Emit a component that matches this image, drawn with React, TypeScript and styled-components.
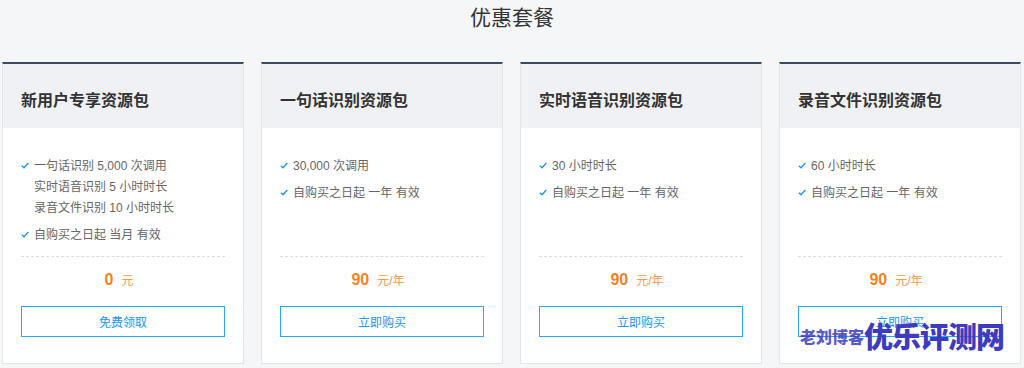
import React from "react";
import styled, { createGlobalStyle } from "styled-components";

const GlobalStyle = createGlobalStyle`
  html, body {
    margin: 0;
    padding: 0;
    background: #f5f6f8;
    font-family: "Liberation Sans", "Noto Sans CJK SC", sans-serif;
  }
`;

const Page = styled.div`
  position: relative;
  width: 1024px;
  height: 368px;
  overflow: hidden;
  background: #f5f6f8;
`;

const Title = styled.h2`
  margin: 0;
  height: 62px;
  padding-top: 1px;
  box-sizing: border-box;
  text-align: center;
  font: normal 400 21px/30px "Noto Sans CJK SC", sans-serif;
  color: #333;
`;

const Cards = styled.div`
  display: grid;
  grid-template-columns: repeat(4, 242px);
  column-gap: 17px;
  padding-left: 2px;
`;

const Card = styled.div`
  background: #fff;
  border-top: 2px solid #3d4a65;
  border-left: 1px solid #e3e5e9;
  border-right: 1px solid #e3e5e9;
  border-bottom: 1px solid #e3e5e9;
`;

const Header = styled.div`
  height: 64px;
  display: flex;
  align-items: center;
  padding: 6px 18px 0;
  box-sizing: border-box;
  background: #f0f1f4;
  font: normal 700 16px "Noto Sans CJK SC", sans-serif;
  color: #333;
`;

const Body = styled.div`
  padding: 28px 18px 26px;
`;

const List = styled.ul`
  list-style: none;
  margin: 0;
  padding: 0;
  height: 100px;
  border-bottom: 1px dashed #dcdcdc;
  box-sizing: content-box;
`;

const Item = styled.li`
  display: flex;
  margin-bottom: 6px;
  font-size: 12px;
  line-height: 21px;
  color: #666;
`;

const Check = styled.span`
  width: 13px;
  flex: none;
  display: flex;
  align-items: flex-start;
  padding-top: 6px;
`;

const Lines = styled.div`
  display: flex;
  flex-direction: column;
`;

const Price = styled.div`
  margin-top: 14px;
  height: 20px;
  padding-right: 8px;
  display: flex;
  justify-content: center;
  align-items: baseline;
  gap: 8px;
  color: #f5811f;
`;

const Amount = styled.span`
  font-size: 16px;
  font-weight: 700;
`;

const Unit = styled.span`
  font-size: 12px;
  color: #f39a4c;
`;

const Action = styled.button`
  display: block;
  width: 100%;
  height: 31px;
  margin-top: 15px;
  background: #fff;
  border: 1px solid #29a9f3;
  border-radius: 0;
  color: #2196f3;
  font: 12px "Noto Sans CJK SC", sans-serif;
  cursor: pointer;
`;

// watermark stamped over the bottom-right corner of the screenshot
const Watermark = styled.div`
  position: absolute;
  left: 800px;
  top: 314px;
  display: flex;
  align-items: center;
  color: #3d3cbf;
  font-family: "Noto Sans CJK SC", sans-serif;
  font-weight: 900;
  pointer-events: none;
`;

const MarkSmall = styled.span`
  font-size: 16px;
  margin-top: 2px;
  opacity: 0.85;
`;

const MarkBig = styled.span`
  font-size: 29px;
  letter-spacing: -1px;
`;

const Tick = () => (
  <svg width="8" height="7" viewBox="0 0 8 7">
    <path d="M0.8 3.8 L3 5.8 L7.3 1" fill="none" stroke="#2196f3" strokeWidth="1.4" />
  </svg>
);

type Plan = {
  name: string;
  items: string[][];
  amount: string;
  unit: string;
  action: string;
};

const plans: Plan[] = [
  {
    name: "新用户专享资源包",
    items: [
      ["一句话识别 5,000 次调用", "实时语音识别 5 小时时长", "录音文件识别 10 小时时长"],
      ["自购买之日起 当月 有效"],
    ],
    amount: "0",
    unit: "元",
    action: "免费领取",
  },
  {
    name: "一句话识别资源包",
    items: [["30,000 次调用"], ["自购买之日起 一年 有效"]],
    amount: "90",
    unit: "元/年",
    action: "立即购买",
  },
  {
    name: "实时语音识别资源包",
    items: [["30 小时时长"], ["自购买之日起 一年 有效"]],
    amount: "90",
    unit: "元/年",
    action: "立即购买",
  },
  {
    name: "录音文件识别资源包",
    items: [["60 小时时长"], ["自购买之日起 一年 有效"]],
    amount: "90",
    unit: "元/年",
    action: "立即购买",
  },
];

export default function App() {
  return (
    <Page>
      <GlobalStyle />
      <Title>优惠套餐</Title>
      <Cards>
        {plans.map((plan) => (
          <Card key={plan.name}>
            <Header>{plan.name}</Header>
            <Body>
              <List>
                {plan.items.map((group, i) => (
                  <Item key={i}>
                    <Check>
                      <Tick />
                    </Check>
                    <Lines>
                      {group.map((line) => (
                        <span key={line}>{line}</span>
                      ))}
                    </Lines>
                  </Item>
                ))}
              </List>
              <Price>
                <Amount>{plan.amount}</Amount>
                <Unit>{plan.unit}</Unit>
              </Price>
              <Action type="button">{plan.action}</Action>
            </Body>
          </Card>
        ))}
      </Cards>
      <Watermark>
        <MarkSmall>老刘博客</MarkSmall>
        <MarkBig>优乐评测网</MarkBig>
      </Watermark>
    </Page>
  );
}
